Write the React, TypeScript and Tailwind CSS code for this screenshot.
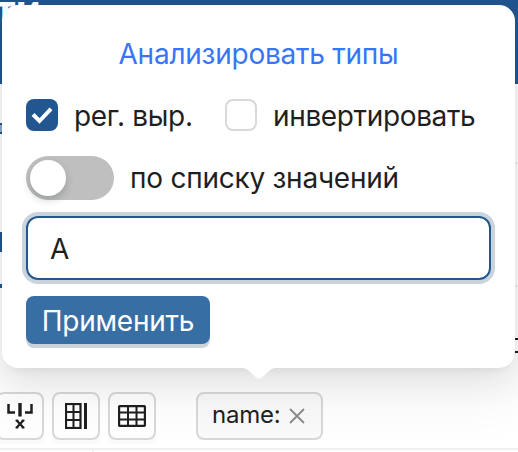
import React from "react";

function ToolButton({ children }: { children: React.ReactNode }) {
  return (
    <button className="flex h-12 w-12 shrink-0 items-center justify-center rounded-lg border-2 border-[#d9d9d9] bg-white shadow-[0_4px_0_rgba(0,0,0,0.02)]">
      {children}
    </button>
  );
}

function Page() {
  return (
    <div className="flex h-full flex-col">
      <header className="h-[84px] shrink-0 bg-[#225691] text-[40px] leading-[40px] font-bold text-white">
        <div className="-ml-[5px] -translate-y-[10px]">ти</div>
      </header>
      <main className="flex h-[308px] shrink-0 justify-between">
        <div className="flex w-4 flex-col overflow-hidden text-[#225691]">
          <div className="mt-[39px] h-[11px] w-[3px] border-y-2 border-[#225691] bg-[#8eaccb]" />
          <div className="mt-[98px] h-5 w-[3px] bg-[#225691]" />
          <div className="mt-8 h-1 bg-[#225691]" />
        </div>
        <div className="flex w-4 flex-col">
          <div className="mt-[78px] h-0.5 bg-[#f0f0f0]" />
          <div className="mt-[121px] h-0.5 bg-[#f0f0f0]" />
          <div className="mt-[51px] h-[15px] border-y-2 border-[#1f1f1f]" />
        </div>
      </main>
      <div className="-ml-1 flex h-14 shrink-0 gap-2">
        <ToolButton>
          <svg width="26" height="26" viewBox="0 0 26 26" fill="none" stroke="#1f1f1f">
            <path d="M1.500 1v8.500H8M24.500 1v8.500H18" strokeWidth="2.500" />
            <path d="M13 0v13.500" strokeWidth="3.400" />
            <path d="M9.200 17l7.600 8M16.800 17l-7.600 8" strokeWidth="2.300" />
            <path d="M8.500 17.300h3M14.500 17.300h3M8.500 24.800h3M14.500 24.800h3" strokeWidth="1" />
          </svg>
        </ToolButton>
        <ToolButton>
          <svg width="22" height="26" viewBox="0 0 22 26" fill="none" stroke="#1f1f1f">
            <rect x="1" y="1" width="14.5" height="24" strokeWidth="2.2" />
            <path d="M8.500 1v24M1 9h14.500M1 17h14.500" strokeWidth="2" />
            <path d="M20.500 0v26" strokeWidth="3" />
          </svg>
        </ToolButton>
        <ToolButton>
          <svg width="28" height="22" viewBox="0 0 28 22" fill="none" stroke="#1f1f1f">
            <rect x="1.1" y="1.1" width="25.8" height="19.8" rx="0.6" strokeWidth="2.2" />
            <path d="M10 1v20M18.500 1v20M1 7.500h26M1 14.500h26" strokeWidth="2" />
          </svg>
        </ToolButton>
        <div className="ml-8 flex h-12 w-[127px] items-center rounded-lg border-2 border-[#d9d9d9] bg-[#fafafa] pl-[14px] text-2xl tracking-[-0.2px] text-[#1f1f1f]">
          <span className="-mt-0.5 w-[69px]">name:</span>
          <svg width="16" height="16" viewBox="0 0 16 16" stroke="#8c8c8c" strokeWidth="1.9" className="ml-2">
            <path d="M1 1l14 14M15 1L1 15" />
          </svg>
        </div>
      </div>
      <div className="h-1 border-t-2 border-[#f0f0f0] pl-[92px]">
        <div className="h-full w-0.5 bg-[#f0f0f0]" />
      </div>
    </div>
  );
}

function FilterPopover() {
  return (
    <section className="absolute left-0.5 top-[5px] flex h-[363px] w-[513px] flex-col rounded-2xl bg-white px-6 text-[28px] leading-[44px] tracking-[-0.24px] text-[#1f1f1f] shadow-[0_12px_32px_0_rgba(0,0,0,0.08),0_6px_12px_-8px_rgba(0,0,0,0.12),0_18px_56px_16px_rgba(0,0,0,0.05)]">
      <a className="mt-[27px] text-center text-[#3875f6]">Анализировать типы</a>
      <div className="mt-[17px] flex h-11 items-center">
        <span className="flex h-8 w-8 items-center justify-center rounded-lg bg-[#225691]">
          <svg width="22" height="18" viewBox="0 0 22 18" fill="none" stroke="white" strokeWidth="4">
            <path d="M2 8.500l6.500 6.500L20 2.800" />
          </svg>
        </span>
        <span className="ml-4 w-[151px] whitespace-nowrap pt-px tracking-[-0.32px]">рег. выр.</span>
        <span className="h-8 w-8 rounded-lg border-2 border-[#d9d9d9]" />
        <span className="ml-4 whitespace-nowrap pt-px tracking-[-0.36px]">инвертировать</span>
      </div>
      <div className="mt-[19px] flex h-11 items-center">
        <span className="flex h-11 w-[88px] items-center rounded-full bg-[#bfbfbf] p-1">
          <span className="h-9 w-9 rounded-full bg-white shadow-[0_4px_8px_rgba(0,35,11,0.2)]" />
        </span>
        <span className="ml-4 whitespace-nowrap">по списку значений</span>
      </div>
      <div className="mt-4 flex h-16 w-[465px] shrink-0 items-center rounded-xl border-2 border-[#225691] pl-[22px] pt-px shadow-[0_0_0_4px_#c9d3dc]">
        A
      </div>
      <button className="mt-4 flex h-12 w-[184px] items-center justify-center rounded-lg bg-[#376ea3] pt-px text-white shadow-[0_4px_0_#c9d3dc]">
        Применить
      </button>
      <svg className="absolute left-[240px] top-[362px]" width="34" height="14" viewBox="0 0 34 14" fill="white">
        <path d="M0 0h34v1c-3 0-5 1-7 3l-7 6.500q-3 2.500-6 0L7 4C5 2 3 1 0 1z" />
      </svg>
    </section>
  );
}

export default function App() {
  return (
    <div className="relative h-[452px] w-[518px] overflow-hidden bg-white font-['Inter','Liberation_Sans',sans-serif]">
      <Page />
      <FilterPopover />
    </div>
  );
}
